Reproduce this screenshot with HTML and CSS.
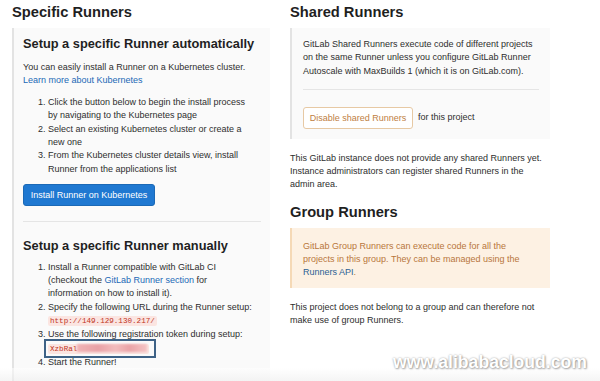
FILE: index.html
```html
<!DOCTYPE html>
<html lang="en">
<head>
  <meta charset="UTF-8" />
  <meta name="viewport" content="width=device-width, initial-scale=1.0"/>
  <title>Runners settings</title>
  <link rel="stylesheet" href="styles.css">
</head>
<body>
  <div class="page">
    <section class="col">
      <h2>Specific Runners</h2>
      <div class="callout callout-left">
        <h3>Setup a specific Runner automatically</h3>
        <p>You can easily install a Runner on a Kubernetes cluster.<br><a href="#">Learn more about Kubernetes</a></p>
        <ol class="steps">
          <li>Click the button below to begin the install process by navigating to the Kubernetes page</li>
          <li>Select an existing Kubernetes cluster or create a new one</li>
          <li>From the Kubernetes cluster details view, install Runner from the applications list</li>
        </ol>
        <button class="btn-primary">Install Runner on Kubernetes</button>
        <hr>
        <h3 class="manual">Setup a specific Runner manually</h3>
        <ol class="steps steps-manual">
          <li>Install a Runner compatible with GitLab CI (checkout the <a href="#">GitLab Runner section</a> for information on how to install it).</li>
          <li>Specify the following URL during the Runner setup:
            <div class="code-line"><code>http://149.129.130.217/</code></div>
          </li>
          <li>Use the following registration token during setup:
            <div class="code-line"><code class="token">XzbRal<span class="blur"></span></code></div>
          </li>
          <li>Start the Runner!</li>
        </ol>
      </div>
    </section>

    <section class="col">
      <h2>Shared Runners</h2>
      <div class="callout callout-right">
        <p>GitLab Shared Runners execute code of different projects on the same Runner unless you configure GitLab Runner Autoscale with MaxBuilds 1 (which it is on GitLab.com).</p>
        <hr>
        <div class="toggle-row">
          <button class="btn-warning">Disable shared Runners</button>
          <span>for this project</span>
        </div>
      </div>
      <p class="note">This GitLab instance does not provide any shared Runners yet. Instance administrators can register shared Runners in the admin area.</p>

      <h2 class="group-title">Group Runners</h2>
      <div class="callout callout-warning">
        <p>GitLab Group Runners can execute code for all the projects in this group. They can be managed using the <a href="#">Runners API</a>.</p>
      </div>
      <p class="note">This project does not belong to a group and can therefore not make use of group Runners.</p>
    </section>
  </div>

  <div class="fade-band"></div>
  <div class="watermark">www.alibabacloud.com</div>
</body>
</html>
```

FILE: styles.css
```css
* { box-sizing:border-box; margin:0; padding:0; }
html, body { height:381px; overflow:hidden; }
body {
  position:relative;
  background:#fff;
  color:#2e2e2e;
  font-family:"Liberation Sans", Arial, sans-serif;
  font-size:9px; line-height:13.3px;
}
a { color:#1b69b6; text-decoration:none; }

.page {
  display:grid;
  grid-template-columns:258px 260px;
  column-gap:20px;
  padding:3px 12px 0;
}

h2 {
  font-size:14.7px; line-height:18px;
  font-weight:bold; color:#1f1f1f;
  margin-bottom:6.6px;
}
h3 {
  font-size:12.8px; line-height:16px;
  font-weight:bold; color:#1f1f1f;
  white-space:nowrap;
  margin-bottom:9.2px;
}
h3.manual { margin-bottom:7.2px; }

.callout {
  background:#fafafa;
  border-left:2px solid #e3e3e3;
}
.callout-left { padding:8.4px 16px 20px 9px; }
.callout-right { padding:10.6px 11px 10px 11px; }

.steps { padding-left:25px; margin-top:8.4px; }
.steps-manual { margin-top:4.6px; }

.btn-primary {
  display:block;
  margin-top:7.6px;
  height:22px; width:132px;
  background:#1f78d1;
  border:1px solid #1b69b6;
  border-radius:3px;
  color:#fff;
  font-family:inherit; font-size:9px;
}

hr {
  border:none;
  border-top:1px solid #e5e5e5;
}
.callout-left hr { margin:15px -7px 16px 0; }
.callout-right hr { margin:11px 0 17px; }

.code-line { line-height:13.3px; }
code {
  font-family:"Liberation Mono", "Courier New", monospace;
  font-size:7.6px;
  color:#c0341d;
  background:#fbe5e1;
  padding:1px 2px;
  border-radius:2px;
}
.token { position:relative; }
.token::after {
  content:"";
  position:absolute;
  left:-4px; right:-7px; top:-5px; bottom:-4px;
  border:2px solid #3e6286;
}
.blur {
  display:inline-block;
  width:70px; height:8px;
  vertical-align:-1px;
  background:linear-gradient(90deg, #f1b3b5, #e9a1a6 30%, #f3bcbd 55%, #eaa3a7 75%, #f5c4c4);
  filter:blur(1.2px);
}

.toggle-row {
  display:flex; align-items:center; gap:5px;
}
.btn-warning {
  height:22px; width:110px;
  background:#fff;
  border:1px solid #e7c9a4;
  border-radius:3px;
  color:#c0803f;
  font-family:inherit; font-size:9px;
}

.note { margin-top:12.6px; }
.group-title { margin-top:11.7px; margin-bottom:6.8px; }

.callout-warning {
  background:#fdf1e3;
  border-left:2px solid #f5d9b6;
  color:#b8763c;
  padding:11.6px 11px 8.5px 11px;
}
.callout-warning a { color:#2b5f94; }

.fade-band {
  position:absolute; left:0; right:0; bottom:0;
  height:13px;
  background:linear-gradient(rgba(255,255,255,0.55), rgba(238,238,238,0.6));
}
.watermark {
  position:absolute; left:393px; top:351px;
  font-size:17.6px; line-height:22px; font-weight:bold;
  color:#fff;
  text-shadow:0 0 2px rgba(0,0,0,0.35), 1px 1px 2px rgba(0,0,0,0.3);
}
```
